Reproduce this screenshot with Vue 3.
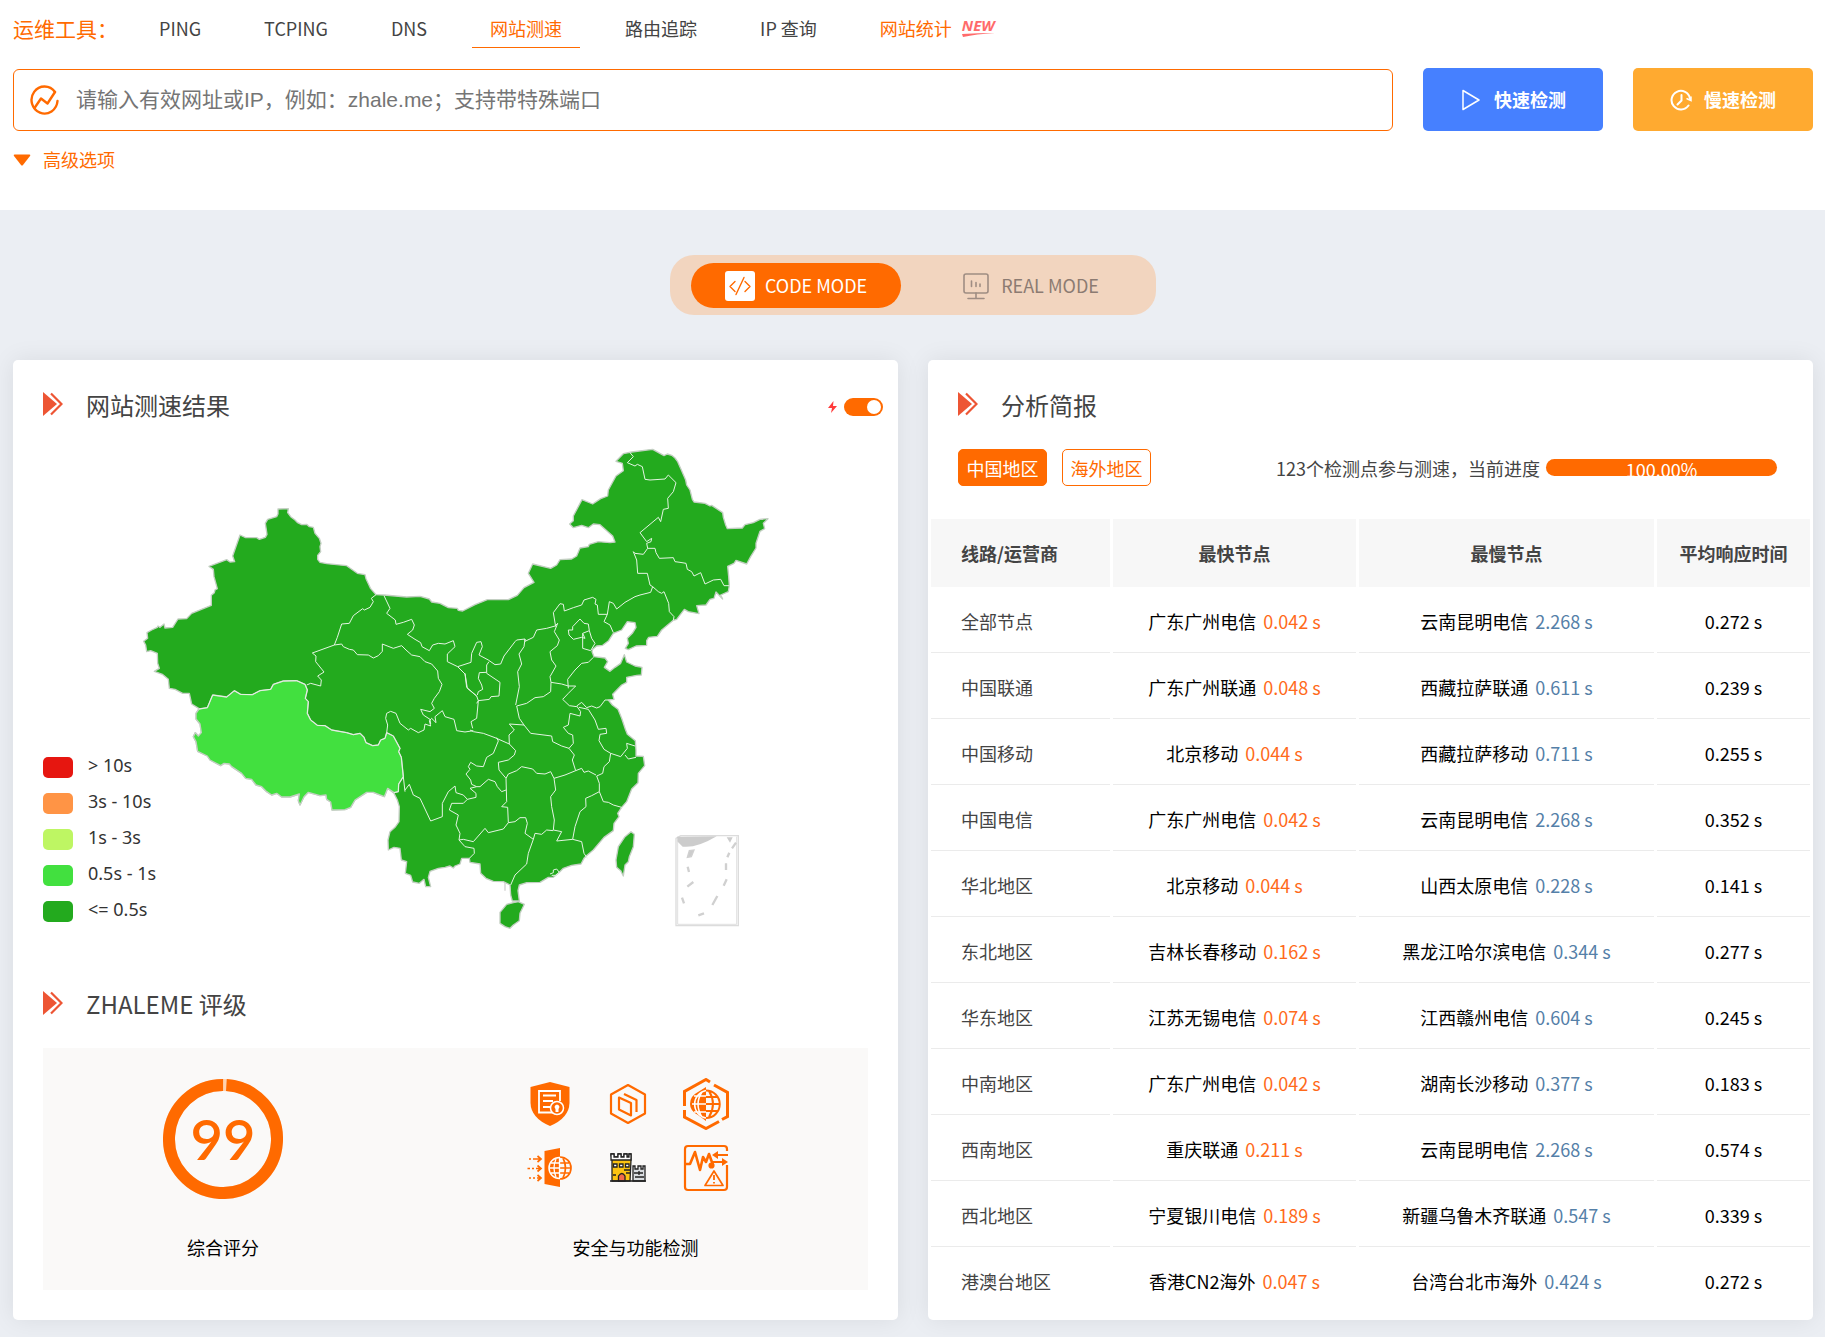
<script setup>
import { ref } from 'vue'

const tools = [
  { name: 'PING' },
  { name: 'TCPING' },
  { name: 'DNS' },
  { name: '网站测速', active: true },
  { name: '路由追踪' },
  { name: 'IP 查询' },
  { name: '网站统计', fresh: true },
]

const legend = [
  { label: '> 10s', color: '#e61610' },
  { label: '3s - 10s', color: '#ff9445' },
  { label: '1s - 3s', color: '#bef663' },
  { label: '0.5s - 1s', color: '#42e03f' },
  { label: '<= 0.5s', color: '#23aa1e' },
]

const rows = [
  ['全部节点', '广东广州电信', '0.042', '云南昆明电信', '2.268', '0.272'],
  ['中国联通', '广东广州联通', '0.048', '西藏拉萨联通', '0.611', '0.239'],
  ['中国移动', '北京移动', '0.044', '西藏拉萨移动', '0.711', '0.255'],
  ['中国电信', '广东广州电信', '0.042', '云南昆明电信', '2.268', '0.352'],
  ['华北地区', '北京移动', '0.044', '山西太原电信', '0.228', '0.141'],
  ['东北地区', '吉林长春移动', '0.162', '黑龙江哈尔滨电信', '0.344', '0.277'],
  ['华东地区', '江苏无锡电信', '0.074', '江西赣州电信', '0.604', '0.245'],
  ['中南地区', '广东广州电信', '0.042', '湖南长沙移动', '0.377', '0.183'],
  ['西南地区', '重庆联通', '0.211', '云南昆明电信', '2.268', '0.574'],
  ['西北地区', '宁夏银川电信', '0.189', '新疆乌鲁木齐联通', '0.547', '0.339'],
  ['港澳台地区', '香港CN2海外', '0.047', '台湾台北市海外', '0.424', '0.272'],
]

const keyword = ref('')
const turbo = ref(true)

// The outline is stored in sections, each relative to its own map tile origin.
const outline = [
  [0, 0, '431,874 443,865 441,848 455,840 472,832 474,828 480,832 492,822 495,834 518,832 534,807 560,806 575,790 634,766 634,736 643,728 645,720 652,716 642,680 640,658 627,649 680,629 690,636 704,635 698,618 720,555 737,563 770,563 778,568 796,562 801,553 796,520 803,508 830,500 834,492 834,477 865,476 863,488 872,500 885,510 893,518 905,524 920,523 928,530 940,532 945,550 958,565 963,580 960,590 962,605 953,616 953,628 960,637 980,641 1040,647 1072,670 1095,674 1098,686 1112,716 1128,734 1152,735'],
  [1140, 240, '80,501 120,499 148,507 155,516 180,520 205,533 232,535 235,541 248,543 285,524 322,509 385,509 412,496 432,473 462,457 445,430 458,402 512,415 530,405 540,389 575,387 590,378 600,354 625,350 628,343 655,335 690,338 705,336 698,318 660,284 640,282 625,293 605,286 580,293 569,282 580,272 580,258 606,209 638,222 662,206 683,198 685,180 708,138 730,122 727,100 708,94 730,71 755,66 818,58 852,77 862,72 875,76 885,84 893,95 903,118 917,150 920,165 930,180 937,208 942,216 975,220 990,228 995,226 1028,248 1030,262 1037,285 1042,296 1087,294 1095,284 1120,278 1140,268 1164,266 1150,280 1154,296 1140,304 1128,340 1128,354 1112,380 1100,402 1068,391 1062,400 1043,409 1046,440 1048,467 1045,485 1022,495 1028,507 1008,486 1002,505 990,508 978,525 950,527 957,551 925,545 913,538 890,568 880,571 845,600 832,619 806,622 800,632 800,646 768,648 745,659 736,655 745,640 742,625 757,610 768,592 765,578 742,575 725,600 700,610 686,632 668,646 650,648 638,658 636,665 642,680 675,684 683,695 673,712 690,724 705,712 722,700 733,674 740,696 765,708 786,712 784,735 770,736 740,742 740,757 725,765 698,793'],
  [1140, 870, '702,178 685,180 697,195 714,208 725,235 736,268 742,283 766,302 768,330 768,348 790,349 794,377 775,400 774,428 755,447 740,485 725,502 713,520 717,530 702,550 700,572 672,592 640,630 622,645 612,655 603,672 575,676 550,685 535,700 520,712 505,712 480,727 440,728 418,735 414,752 418,783 397,783 392,765 390,735 370,725 340,724 318,715 302,700 300,672 270,667 268,655 245,655 240,672 225,678 220,684 210,678 195,682 175,685 150,694 145,712 152,740 137,740 132,718 118,730 98,726 92,706 76,700 80,665 64,660 60,625 42,622 25,630 24,600 30,575 45,562 57,545 58,500 52,480 42,460'],
  [0, 900, '1163,415 1153,440 1120,427 1100,427 1065,450 1052,472 1035,479 996,480 992,456 980,448 978,435 960,437 925,427 912,440 900,465 895,452 898,432 870,441 845,441 830,430 815,435 800,425 785,410 768,405 755,388 737,385 725,370 695,350 688,342 672,340 662,347 630,330 622,318 593,304 588,275 580,260 586,248 595,258 604,248 600,222 588,207 588,190 597,176 575,162 568,130 548,130 525,118 508,115 505,88 487,73 463,64 478,55 473,40 472,10 452,2 440,5 437,-15'],
]

const mainland = outline
  .map(([dx, dy, points]) =>
    points
      .split(' ')
      .map((pair) => {
        const [x, y] = pair.split(',').map(Number)
        return `${x + dx},${y + dy}`
      })
      .join(' '),
  )
  .join(' ')

const tibet =
  '597,177 622,173 638,135 680,141 703,122 722,133 757,134 780,122 812,118 820,103 850,93 890,92 915,103 922,120 916,145 925,155 922,190 932,210 952,226 975,227 995,240 1040,248 1060,254 1080,250 1092,262 1098,278 1118,287 1135,285 1142,270 1155,265 1160,248 1180,258 1200,295 1196,305 1204,322 1210,380 1196,402 1195,425 1182,428 1163,415 1153,440 1120,427 1100,427 1065,450 1052,472 1035,479 996,480 992,456 980,448 978,435 960,437 925,427 912,440 900,465 895,452 898,432 870,441 845,441 830,430 815,435 800,425 785,410 768,405 755,388 737,385 725,370 695,350 688,342 672,340 662,347 630,330 622,318 593,304 588,275 580,260 586,248 595,258 604,248 600,222 588,207 588,190'

const borders = [
  {
    shift: 'translate(0 0)',
    lines: [
      '1128,734 1114,745 1120,755 1110,772 1093,780 1088,776 1060,797 1048,820 1025,822 1012,862 1003,885 937,909 948,918 947,935 972,966 953,978 964,990 962,1008 932,1000 920,1005',
      '1152,737 1170,775 1160,790 1186,810 1188,823 1210,817 1235,808 1243,825 1238,840 1222,853 1245,868 1262,878 1266,890 1288,902 1298,885 1315,880 1335,882 1360,872 1365,890 1342,912 1342,935 1373,950',
      '1003,885 1025,882 1030,890 1048,898 1060,900 1072,914 1105,915 1120,924 1135,917 1147,904 1147,882 1180,895 1205,887 1218,900 1235,915 1260,920 1275,935 1295,942 1313,963 1315,985 1326,1003 1318,1025 1303,1045 1295,1060 1303,1075 1290,1085 1262,1078 1270,1095 1290,1108 1292,1122',
      '1373,950 1395,972 1400,1012 1430,1038',
    ],
  },
  {
    shift: 'translate(0 900)',
    lines: [
      '1160,248 1163,225 1157,205 1160,190 1172,184 1188,190 1200,220 1225,240 1232,235 1255,248 1272,240 1275,222 1292,228 1288,212 1295,205 1308,218 1305,200 1327,182 1335,200 1362,208 1370,242 1395,246 1420,242',
      '1210,380 1215,425',
    ],
  },
  {
    shift: 'translate(1140 240)',
    lines: [
      '233,710 273,697 275,670 290,637 303,635 307,650 297,675 325,690 345,704 362,702 372,678 405,635 410,630 435,627 435,634 460,622 470,600 500,595 525,588 533,580',
      '292,795 295,785 308,778 305,765 295,745 298,728 318,727',
      '327,695 320,705 320,730 360,757 357,798 333,800 328,808 295,812 290,820',
      '435,627 432,650 417,672 425,702 413,725 418,770 407,825',
      '533,580 523,605 538,630 532,647 510,665 515,690 528,708 510,740 513,757 512,785 490,800 465,803 440,820 410,828',
      '527,590 520,548 540,521 550,523 553,543 580,533 605,525 612,510 638,502 648,508 645,522 652,525 655,553 682,553 688,515 700,520 710,537 735,517 765,500 780,495 812,487 818,470',
      '682,553 672,575 690,585 700,608',
      '578,590 600,567 612,580 625,582 628,602 608,610 615,625 605,622 580,628 567,615 565,600 578,600 578,590',
      '628,602 635,625 645,640 632,662 608,655 608,610',
      '513,757 545,762 565,768 587,768 565,790 548,808 568,827 590,830',
      '565,775 563,748 585,720 605,700 625,697 640,682',
      '750,68 760,80 742,98 765,108 772,103 787,110 795,148 810,150 855,147 865,135 888,158 880,185 863,205 865,235 850,238 842,275 835,262 780,308 800,335 815,325 813,335 800,340 803,355 825,355 828,368 838,385 880,383 885,395 900,397 918,400 922,418 935,425 942,438 962,428 975,462 1000,450 1022,448 1032,467 1048,467',
      '803,355 790,373 765,370 760,365 770,390 773,430 802,430 810,465 818,470 835,485 845,490 852,485 866,520 868,545 882,560 880,571',
    ],
  },
  {
    shift: 'translate(1140 870)',
    lines: [
      '255,100 262,145 290,168 295,182 290,235 273,245 278,265',
      '270,270 280,275 310,280 345,293 388,312 407,332 403,345 385,360 355,367 357,390 378,415 380,485 365,500 383,502 385,548',
      '410,198 418,235 432,255 452,280 515,288 518,305 545,318 567,325 583,345 577,360 587,392 555,405 522,415 512,395 495,402 470,400 458,387 425,380 410,392 385,402 378,415',
      '432,255 388,252 403,270 387,285 388,312',
      '590,198 605,187 620,203 635,198 650,204 660,200 675,180 685,180',
      '590,198 602,215 600,228 570,220 565,255 550,262 565,280 578,285 580,310 567,325',
      '597,202 625,208 645,240 655,268 678,265 680,280 660,283 657,302 672,328 692,340 722,350 742,325 740,310 765,318',
      '735,345 745,357 768,352',
      '692,340 688,365 672,380 668,400 650,408 658,430 658,455 670,485 685,487 700,495 725,502',
      '587,392 605,385 612,397 625,393 648,405',
      '350,293 355,303 340,340 320,352 310,380 290,378 272,367 265,380 270,388 258,402 272,420 275,433 290,440 300,440 325,418 345,425 352,440 365,455 378,450',
      '290,440 270,445 288,460 288,472 262,478 250,465 228,458 225,438 205,455 187,490 187,530 152,543 120,475 100,465 88,433 75,450',
      '262,478 250,490 215,490 208,510 235,525 228,555 240,580 237,600 250,598 280,605 315,565 325,578 370,567 385,548',
      '237,600 255,620 282,625 283,640 268,655',
      '385,548 405,545 420,533 437,533 442,550 435,580 460,598 445,640 440,672 405,705 392,735',
      '460,598 465,580 485,583 500,570 520,572',
      '522,415 527,450 512,470 515,500 523,540 520,570 545,575 530,603 578,598 585,560 600,515 618,500 617,475 635,467 658,455',
      '578,598 605,605 612,640 622,655',
      '510,702 520,698 520,690 530,687 538,697 527,706 515,706',
    ],
  },
]
</script>

<template>
  <div class="page">
    <header class="top">
      <nav class="tools">
        <strong class="tools-title">运维工具：</strong>
        <a
          v-for="tool in tools"
          :key="tool.name"
          href="#"
          class="tool"
          :class="{ active: tool.active, fresh: tool.fresh }"
        >
          {{ tool.name }}
          <span v-if="tool.fresh" class="new">NEW
            <svg class="new-line" viewBox="0 0 33 4"><path d="M0 1Q16 0 33 0Q14 1 1 4Z" fill="#ff6b6b" /></svg>
          </span>
        </a>
      </nav>

      <form class="search" @submit.prevent>
        <label class="field">
          <svg class="field-icon" viewBox="0 0 30 30" fill="none" stroke="#ff6a00" stroke-width="2.4" stroke-linecap="round" stroke-linejoin="round">
            <path d="M26 7A13 13.500 0 1 0 28.500 16" />
            <path d="M5.500 23L12 13.500L18.500 18.500L26 7" />
          </svg>
          <input v-model="keyword" type="text" aria-label="网址或IP" placeholder="请输入有效网址或IP，例如：zhale.me；支持带特殊端口" />
        </label>
        <button type="submit" class="go fast">
          <svg viewBox="0 0 22 22" fill="none" stroke="#fff" stroke-width="1.500" stroke-linejoin="round"><path d="M3 1.500L19 11L3 20.500Z" /></svg>
          快速检测
        </button>
        <button type="button" class="go slow">
          <svg viewBox="0 0 22 22" fill="none" stroke="#fff" stroke-width="2" stroke-linecap="round">
            <path d="M20 9.500A9.300 9.300 0 1 0 18.500 16.500" /><path d="M11.500 6V11.500L7.500 15.500" /><path d="M17 9.800L21 11.500V8" stroke-width="1.500" />
          </svg>
          慢速检测
        </button>
      </form>

      <button type="button" class="advanced">
        <svg viewBox="0 0 18 12"><path d="M1.500 .5H16.500Q18 .5 17 2L10 11Q9 12 8 11L1 2Q0 .5 1.500 .5Z" fill="#ff6a00" /></svg>
        高级选项
      </button>
    </header>

    <main>
      <div class="modes">
        <button type="button" class="mode on">
          <svg viewBox="0 0 30 30" fill="none" stroke="#ff6a00" stroke-width="1.400" stroke-linecap="round" stroke-linejoin="round">
            <rect width="30" height="30" rx="3" fill="#fff" stroke="none" />
            <path d="M10 10.500L5 15.500L10 20.500M20 10.500L25 15.500L20 20.500M19 6.500L11 23.500" />
          </svg>
          CODE MODE
        </button>
        <button type="button" class="mode">
          <svg viewBox="0 0 30 30" fill="none" stroke="#9f8d83" stroke-width="1.600" stroke-linecap="round" stroke-linejoin="round">
            <rect x="3" y="3" width="24" height="19" rx="2" />
            <path d="M15 22V27M7 27.500H23M10.500 10V15.500M15 11.500V15.500M19 13V15.500" />
          </svg>
          REAL MODE
        </button>
      </div>

      <div class="cards">
        <section class="card">
          <div class="heading">
            <svg class="mark" viewBox="0 0 20 24"><path d="M0 0L14 12L0 24Z" fill="#ed5534" /><path d="M8 1.500L18.500 12L8 22.500" fill="none" stroke="#ed5534" stroke-width="2.200" /></svg>
            <h2>网站测速结果</h2>
            <label class="turbo">
              <svg viewBox="0 0 9 12"><path d="M5.500 0L0 7H4L3 12L9 5H5Z" fill="#ff3b3b" /></svg>
              <input v-model="turbo" type="checkbox" aria-label="极速模式" />
            </label>
          </div>

          <div class="map">
            <svg viewBox="129 297 2475 1530" role="img" aria-label="中国地图">
              <g stroke="#c3cfc2" stroke-width="4" stroke-linejoin="round" fill="#23aa1e">
                <polygon :points="mainland" />
                <g transform="translate(1140 870)">
                  <polygon points="380,793 400,788 415,785 433,793 420,820 418,842 400,855 390,865 375,860 360,850 360,817" />
                  <polygon points="753,575 763,583 760,620 748,650 745,665 735,675 730,708 722,692 710,682 708,660 715,620 735,590" />
                </g>
                <polygon :points="tibet" transform="translate(0 900)" fill="#42e03f" />
              </g>
              <g fill="none" stroke="#e3f5e2" stroke-width="3" stroke-linejoin="round">
                <g v-for="tile in borders" :key="tile.shift" :transform="tile.shift">
                  <polyline v-for="line in tile.lines" :key="line" :points="line" />
                </g>
                <polyline transform="translate(0 900)" points="597,177 622,173 638,135 680,141 703,122 722,133 757,134 780,122 812,118 820,103 850,93 890,92 915,103 922,120 916,145 925,155 922,190 932,210 952,226 975,227 995,240 1040,248 1060,254 1080,250 1092,262 1098,278 1118,287 1135,285 1142,270 1155,265 1160,248 1180,258 1200,295 1196,305 1204,322 1210,380 1196,402 1195,425 1182,428" />
              </g>
              <g transform="translate(1140 870)" fill="none" stroke="#d0d0d0" stroke-width="4">
                <path d="M888 595L902 587H1075V857H888Z" stroke="#dcdcdc" stroke-width="4" />
                <path d="M893 598V853H1070V590" stroke-width="2" />
                <path d="M891 590L1010 589Q950 625 908 620L893 605Z" fill="#ccc" stroke="none" />
                <path d="M1040 592H1058L1050 608Z" fill="#ccc" stroke="none" />
                <path d="M922 652L928 632L942 630L934 650Z" fill="#ccc" />
                <path d="M1056 625L1068 608M1042 652L1048 638M923 680L927 696M1038 670V690M922 740L940 726M1031 737L1040 718M906 773L912 790M997 795L1012 768M955 826L972 820" stroke-width="7" />
                <path d="M375 728V752" stroke-width="4" />
              </g>
            </svg>
            <ul class="legend">
              <li v-for="item in legend" :key="item.label">
                <i :style="{ background: item.color }"></i>{{ item.label }}
              </li>
            </ul>
          </div>

          <div class="heading">
            <svg class="mark" viewBox="0 0 20 24"><path d="M0 0L14 12L0 24Z" fill="#ed5534" /><path d="M8 1.500L18.500 12L8 22.500" fill="none" stroke="#ed5534" stroke-width="2.200" /></svg>
            <h2>ZHALEME 评级</h2>
          </div>

          <div class="rating">
            <div class="rate">
              <div class="visual">
                <div class="score">
                  <svg viewBox="0 0 120 120" fill="none" stroke-width="12">
                    <circle cx="60" cy="60" r="54" stroke="#ffd2b0" />
                    <circle cx="60" cy="60" r="54" stroke="#ff6a00" pathLength="100" stroke-dasharray="99 1" transform="rotate(-86.400 60 60)" />
                  </svg>
                  <span>99</span>
                </div>
              </div>
              <p>综合评分</p>
            </div>
            <div class="rate">
              <div class="visual">
                <div class="checks">
                  <svg viewBox="0 0 48 48">
                    <path d="M24 2L43.500 7V23Q43 38 24 46Q5 38 4.500 23V7Z" fill="#ff6a00" />
                    <path d="M31 32.500H13V11H34V21" fill="none" stroke="#fff" stroke-width="1.800" />
                    <path d="M17 15.500H30M17 21H27M17 27H25" stroke="#fff" stroke-width="2" />
                    <circle cx="31" cy="28" r="6.500" fill="#ff6a00" stroke="#fff" stroke-width="1.500" />
                    <path d="M29.500 32V29Q27 26 31 24.500Q35 26 32.500 29V32Z" fill="#fff" />
                  </svg>
                  <svg viewBox="0 0 48 48" fill="none" stroke="#ff6a00" stroke-width="2.200" stroke-linejoin="round">
                    <path d="M24 5L41 14.500V33.500L24 43L7 33.500V14.500Z" />
                    <path d="M15 17.500L27 23V35.500L15 29.500ZM20 14L32.500 20V32" />
                  </svg>
                  <svg viewBox="0 0 48 52" fill="none" stroke="#ff6a00">
                    <path d="M28 4L24 1.500L2.500 13.500V28M2.500 32V39L24 50.500L37 43.500M32 7L45.500 14.500V36M45.500 36V38.500L40 41.500" stroke-width="3" />
                    <path d="M24 9V43L16 37Q8 33 8 26Q8 18 16 14Z" fill="#ff6a00" stroke="none" />
                    <path d="M24 12.500A14 14 0 0 0 24 40M10 26H24M20 14Q12 26 20 39M12 18H24M12 34H24" stroke="#fff" stroke-width="1.500" />
                    <path d="M24 12.500A13.500 13.500 0 0 1 24 40M24 26H38M27 13Q35 26 27 39M24 19H36M24 33H36" stroke-width="2" />
                  </svg>
                  <svg viewBox="0 0 48 48" fill="none" stroke="#ff6a00">
                    <path d="M18.500 7L34 4V43L18.500 40Z" fill="#ff6a00" stroke="none" />
                    <circle cx="33.500" cy="24" r="10.500" fill="#ff6a00" stroke="#fff" stroke-width="1.500" />
                    <path d="M34 13.500A10.500 10.500 0 0 1 34 34.500Z" fill="#faf9f8" stroke="none" />
                    <path d="M34 13A11 11 0 0 1 34 35M34 24H45M37 14Q42 24 37 34M34 19H43M34 29H43" stroke-width="1.700" />
                    <path d="M23 24H33M25 19H33M25 29H33M30 15Q26 24 30 33M33.500 14V34" stroke="#fff" stroke-width="1.300" />
                    <path d="M3 15H5M7 15H15M11.500 12L15 15L11.500 18M1.500 24.500H4M6 24.500H8M10 24.500H15M11.500 21.500L15 24.500L11.500 27.500M3 34H5M7 34H9M11 34H15M11.500 31L15 34L11.500 37" stroke-width="1.700" />
                  </svg>
                  <svg viewBox="0 0 48 48" stroke="#222" stroke-width="1.300">
                    <path d="M29 27V22H31V25H34V22H37V25H39V22H41V37H29Z" fill="#d9dde1" />
                    <path d="M8 37V15L7 11V10H10V13H14V10H17V13H20V10H23V13H25V10H27V16L26 37Z" fill="#fbc311" />
                    <path d="M7 11V10H10V13H14V10H17V13H20V10H23V13H25V10H27V16H7Z" fill="#fff" />
                    <path d="M9.500 20H13V23H9.500ZM15.500 20H19V23H15.500ZM21.500 20H25V23H21.500Z" fill="#fff" />
                    <path d="M14.500 37V32Q18 27 21 32V37Z" fill="#f26a4b" />
                    <path d="M20 26H27M22 29H26M9 31H12M30 29H39M31 33H40M35 27V31M6 37H42" fill="none" />
                  </svg>
                  <svg viewBox="0 0 48 48" fill="none" stroke="#ff6a00" stroke-width="2.200" stroke-linejoin="round">
                    <path d="M45 7V5Q45 2 42 2H6Q3 2 3 5V43Q3 46 6 46H42Q45 46 45 43V21" />
                    <path d="M4 20H8L13 8L18 26L21 13L24 18L27 10L31 21" stroke-width="2.600" />
                    <circle cx="29.500" cy="21.500" r="2" fill="#ff6a00" />
                    <path d="M46 11H33M30 18H42" stroke-width="1.800" />
                    <path d="M36 7L30 11L36 15ZM40 14L46 18L40 22Z" fill="#ff6a00" stroke="none" />
                    <path d="M32 27L41 41.500H23Z" stroke-width="1.700" /><path d="M32 31V36M32 38V39.500" stroke-width="1.800" />
                  </svg>
                </div>
              </div>
              <p>安全与功能检测</p>
            </div>
          </div>
        </section>

        <section class="card">
          <div class="heading">
            <svg class="mark" viewBox="0 0 20 24"><path d="M0 0L14 12L0 24Z" fill="#ed5534" /><path d="M8 1.500L18.500 12L8 22.500" fill="none" stroke="#ed5534" stroke-width="2.200" /></svg>
            <h2>分析简报</h2>
          </div>
          <div class="filters">
            <button type="button" class="region on">中国地区</button>
            <button type="button" class="region">海外地区</button>
            <span class="progress-label">123个检测点参与测速，当前进度</span>
            <div class="progress" role="progressbar" aria-valuenow="100" aria-valuemin="0" aria-valuemax="100">
              <div class="bar" :style="{ width: '100%' }">100.00%</div>
            </div>
          </div>
          <table>
            <colgroup><col class="c-line" /><col class="c-fast" /><col class="c-slow" /><col class="c-avg" /></colgroup>
            <thead>
              <tr><th scope="col">线路/运营商</th><th scope="col">最快节点</th><th scope="col">最慢节点</th><th scope="col">平均响应时间</th></tr>
            </thead>
            <tbody>
              <tr v-for="[line, fast, fastTime, slow, slowTime, average] in rows" :key="line">
                <td>{{ line }}</td>
                <td>{{ fast }}<span class="time quick">{{ fastTime }} s</span></td>
                <td>{{ slow }}<span class="time lag">{{ slowTime }} s</span></td>
                <td>{{ average }} s</td>
              </tr>
            </tbody>
          </table>
        </section>
      </div>
    </main>
  </div>
</template>

<style>
body {
  margin: 0;
  background: #ebeef3;
}
</style>

<style scoped>
.page {
  font-family: "Noto Sans CJK SC", sans-serif;
  font-size: 18px;
  line-height: 27px;
  color: #444;
}
button,
input {
  font: inherit;
  margin: 0;
}
button {
  border: 0;
  cursor: pointer;
}
.top {
  box-sizing: border-box;
  padding: 0 12px 37px 13px;
  background: #fff;
}
.tools {
  display: flex;
  align-items: center;
  gap: 27px;
  height: 58px;
}
.tools-title {
  width: 101px;
  padding-bottom: 2px;
  font-size: 21px;
  font-weight: 400;
  color: #ff6a00;
  white-space: nowrap;
}
.tool {
  padding: 0 18px;
  line-height: 37px;
  color: #444;
  text-decoration: none;
  border-bottom: 1px solid transparent;
  white-space: nowrap;
}
.active {
  color: #ff6a00;
  border-color: #ff6a00;
}
.fresh {
  display: flex;
  gap: 10px;
  color: #ff6a00;
}
.new {
  display: flex;
  flex-direction: column;
  padding-top: 8px;
  font: italic 700 15px/15px "Open Sans", sans-serif;
  color: #ff6b6b;
}
.new-line {
  width: 33px;
  height: 4px;
}
.search {
  display: flex;
  gap: 30px;
  padding: 10px 0 15px;
}
.field {
  flex: 1;
  display: flex;
  align-items: center;
  gap: 17px;
  box-sizing: border-box;
  height: 62px;
  margin-top: 1px;
  padding: 0 15px;
  border: 1px solid #ff6a00;
  border-radius: 6px;
}
.field-icon {
  width: 30px;
  height: 30px;
}
.field input {
  flex: 1;
  min-width: 0;
  padding: 0;
  border: 0;
  outline: 0;
  background: none;
  font: 21px/32px "Liberation Sans", "Noto Sans CJK SC", sans-serif;
}
.field input::placeholder {
  color: #757575;
}
.go {
  display: flex;
  align-items: center;
  justify-content: center;
  gap: 12px;
  width: 180px;
  height: 63px;
  border-radius: 5px;
  color: #fff;
  font-weight: 700;
}
.go svg {
  width: 22px;
  height: 22px;
}
.fast {
  background: #4680ff;
}
.slow {
  background: #ffaa30;
}
.advanced {
  display: flex;
  align-items: center;
  gap: 12px;
  padding: 0;
  background: none;
  color: #ff6a00;
}
.advanced svg {
  width: 18px;
  height: 12px;
}
main {
  padding: 45px 12px 17px 13px;
}
.modes {
  display: flex;
  gap: 24px;
  width: max-content;
  margin: 0 auto 45px;
  padding: 8px 21px 7px;
  border-radius: 24px;
  background: #f2d5bf;
}
.mode {
  display: flex;
  align-items: center;
  justify-content: center;
  gap: 10px;
  width: 210px;
  height: 45px;
  padding: 0;
  border-radius: 23px;
  background: none;
  color: #8c7b72;
}
.mode svg {
  width: 30px;
  height: 30px;
}
.mode.on {
  background: #ff6a00;
  color: #fff;
}
.cards {
  display: grid;
  grid-template-columns: 1fr 1fr;
  gap: 30px;
}
.card {
  min-width: 0;
  border-radius: 5px;
  background: #fff;
  box-shadow: 0 0 24px rgba(0, 0, 0, 0.08);
}
.heading {
  display: flex;
  align-items: center;
  gap: 23px;
  padding: 30px 15px 27px 30px;
  height: 32px;
}
.mark {
  width: 20px;
  height: 24px;
  margin-bottom: 4px;
}
h2 {
  flex: 1;
  margin: 0 0 2px;
  font-size: 24px;
  line-height: 32px;
  font-weight: 400;
}
.turbo {
  display: flex;
  align-items: center;
  gap: 7px;
  padding-top: 2px;
}
.turbo svg {
  width: 9px;
  height: 12px;
}
.turbo input {
  appearance: none;
  display: flex;
  justify-content: flex-end;
  box-sizing: border-box;
  width: 39px;
  height: 18px;
  padding: 2px;
  border-radius: 9px;
  background: #ff6a00;
}
.turbo input::before {
  content: "";
  width: 14px;
  height: 14px;
  border-radius: 7px;
  background: #fff;
}
.turbo input:not(:checked) {
  justify-content: flex-start;
  background: #ccc;
}
.map {
  display: grid;
  margin: 0 30px;
}
.map > * {
  grid-area: 1 / 1;
}
.map > svg {
  display: block;
  width: 100%;
  overflow: visible;
}
.legend {
  align-self: end;
  justify-self: start;
  display: grid;
  gap: 15px;
  margin: 0 0 37px;
  padding: 0;
  list-style: none;
  font-family: "Noto Sans", sans-serif;
  line-height: 17px;
  color: #333;
}
.legend li {
  display: flex;
  gap: 15px;
}
.legend i {
  width: 30px;
  height: 21px;
  border-radius: 5px;
}
.rating {
  display: grid;
  grid-template-columns: 24fr 31fr;
  margin: 0 30px 30px;
  background: #faf9f8;
  text-align: center;
  color: #000;
}
.visual {
  display: flex;
  align-items: flex-end;
  justify-content: center;
  height: 151px;
}
.score {
  display: grid;
  place-items: center;
  width: 120px;
  height: 120px;
}
.score > * {
  grid-area: 1 / 1;
}
.score span {
  font: 600 56px/60px Lato, sans-serif;
  color: #ff6a00;
}
.checks {
  display: grid;
  grid-template-columns: repeat(3, 78px);
  grid-auto-rows: 64px;
  place-items: center;
  margin: 0 16px -1px 0;
}
.checks svg {
  width: 48px;
  height: 52px;
}
.rate p {
  margin: 35px 0 29px;
}
.filters {
  display: flex;
  align-items: center;
  padding: 0 36px 30px 30px;
}
.region {
  box-sizing: border-box;
  width: 89px;
  height: 37px;
  margin-right: 15px;
  padding: 2px 0 0;
  border: 1px solid #ff6a00;
  border-radius: 5px;
  background: #fff;
  color: #ff6a00;
}
.region.on {
  background: #ff6a00;
  color: #fff;
}
.progress-label {
  margin-left: auto;
  margin-right: 6px;
  padding-top: 2px;
  white-space: nowrap;
}
.progress {
  width: 231px;
  height: 17px;
  border-radius: 9px;
  background: #eee;
}
.bar {
  height: 17px;
  border-radius: 9px;
  line-height: 21px;
  background: #ff6a00;
  color: #fff;
  text-align: center;
}
table {
  width: 100%;
  table-layout: fixed;
  border-collapse: separate;
  border-spacing: 3px;
}
.c-line {
  width: 20.6%;
}
.c-fast {
  width: 27.9%;
}
.c-slow {
  width: 33.9%;
}
th {
  height: 68px;
  padding: 0;
  background: #f7f7f7;
  font-weight: 700;
}
td {
  height: 62px;
  padding: 0;
  border-bottom: 1px solid #ebebeb;
  text-align: center;
  color: #000;
}
tr:last-child td {
  border-bottom-color: transparent;
}
th:first-child,
td:first-child {
  padding-left: 30px;
  text-align: left;
  color: #444;
}
.time {
  margin-left: 7px;
}
.quick {
  color: #ff6a1a;
}
.lag {
  color: #5580a8;
}
</style>
